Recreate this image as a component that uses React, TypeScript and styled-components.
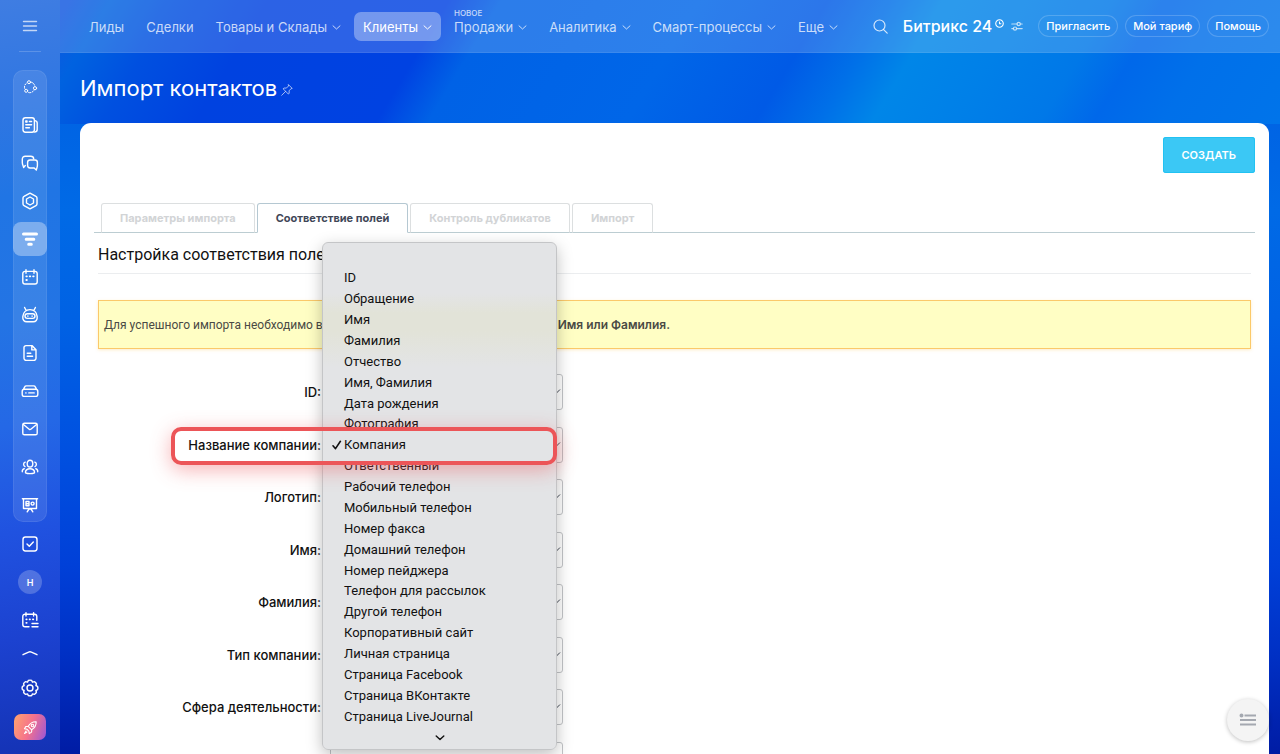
import React from 'react';
import styled, { createGlobalStyle, css } from 'styled-components';

const GlobalStyle = createGlobalStyle`
  *, *::before, *::after { box-sizing: border-box; }
  body {
    margin: 0;
    font-family: Inter, "Liberation Sans", sans-serif;
    color: #111;
  }
  button, select { font: inherit; color: inherit; }
  button { border: 0; padding: 0; background: none; cursor: pointer; }
  a { color: inherit; text-decoration: none; }
`;

const Shell = styled.div`
  display: grid;
  grid-template-columns: 60px minmax(0, 1fr);
  height: 100vh;
  overflow: hidden;
  background:
    linear-gradient(
      121deg,
      #1058e0 0, #1058e0 60px, #0062e0 95px, #0050e0 150px, #0042e0 230px, #0042e2 385px, #0062e6 430px, #0066e8 600px,
      #005ae6 710px, #0070e8 765px, #0086e8 810px, #0080e8 880px, #0078e8 955px, #0068ea 1000px, #0070ea 1060px, #0074ea 1161px
    ) top / 100% 124px no-repeat,
    linear-gradient(180deg, #0064e4 16%, #006ae6 28%, #0062e4 42%, #0050e0 60%, #0040d8 75%, #0030c4 87%, #001ca4 100%);
`;

const Sidebar = styled.nav`
  display: flex;
  flex-direction: column;
  align-items: center;
  gap: 4px;
  color: #fff;
  background: linear-gradient(170deg, #3f7de2 0%, #2f76e2 14%, #2075e4 26%, #2374e4 42%, #2468e6 56%, #2052e0 70%, #1c42d0 84%, #1432b4 100%);
`;

const MenuToggle = styled.button`
  display: grid;
  place-items: center;
  width: 34px;
  height: 52px;
  opacity: 0.7;
`;

const SideDivider = styled.hr`
  width: 22px;
  height: 1px;
  margin: -5px 0 13px;
  border: 0;
  background: #ffffff30;
`;

const SideGroup = styled.div`
  display: flex;
  flex-direction: column;
  gap: 4px;
  margin: 1px 0;
  border-radius: 10px;
  background: #ffffff1a;
  box-shadow: inset 0 0 0 1px #ffffff14;
`;

const SideButton = styled.button<{ $active?: boolean; $short?: boolean }>`
  display: grid;
  place-items: center;
  width: 34px;
  height: ${(p) => (p.$short ? 26 : 34)}px;
  border-radius: 8px;
  background: ${(p) => (p.$active ? '#ffffff58' : 'none')};
`;

const Avatar = styled.span`
  display: grid;
  place-items: center;
  width: 24px;
  height: 24px;
  border-radius: 50%;
  background: #ffffff38;
  font-size: 9px;
  font-weight: 600;
`;

const RocketButton = styled.button`
  display: grid;
  place-items: center;
  width: 32px;
  height: 26px;
  margin-top: 5px;
  border-radius: 7px;
  color: #fff;
  background: linear-gradient(110deg, #ffa56e 0%, #f5728c 50%, #9a56d8 100%);
`;

const Main = styled.main`
  display: flex;
  flex-direction: column;
  min-width: 0;
  min-height: 0;
`;

const TopBar = styled.header`
  display: flex;
  align-items: center;
  justify-content: space-between;
  flex: none;
  height: 53px;
  padding: 0 11px 0 20px;
  color: #fff;
  background: #ffffff2c;
  border-bottom: 1px solid #ffffff14;
`;

const NavList = styled.div`
  display: flex;
  gap: 4px;
`;

const NavLink = styled.a<{ $active?: boolean }>`
  position: relative;
  display: flex;
  align-items: center;
  gap: 5px;
  height: 29px;
  padding: 2px 9px 0;
  border-radius: 7px;
  font-size: 13px;
  white-space: nowrap;
  color: ${(p) => (p.$active ? '#fff' : '#ffffffc0')};
  background: ${(p) => (p.$active ? '#ffffff58' : 'none')};
`;

const NewMark = styled.span`
  position: absolute;
  left: 9px;
  top: -4px;
  font-size: 8px;
  line-height: 10px;
  font-weight: 500;
`;

const Tools = styled.div`
  display: flex;
  align-items: center;
  gap: 7px;
`;

const SearchButton = styled.button`
  display: grid;
  margin-right: 8px;
  color: #ffffffcc;
`;

const Brand = styled.a`
  display: flex;
  align-items: center;
  font-size: 16px;
  font-weight: 500;
  white-space: nowrap;
  svg { margin: 0 0 6px 3px; }
`;

const TuneButton = styled.button`
  display: grid;
  margin-right: 8px;
  color: #ffffffb0;
`;

const PillButton = styled.button`
  height: 22px;
  padding: 0 8px;
  border-radius: 11px;
  box-shadow: inset 0 0 0 1px #ffffff30;
  font-size: 11px;
  font-weight: 500;
  white-space: nowrap;
`;

const TitleRow = styled.div`
  display: flex;
  align-items: center;
  gap: 4px;
  flex: none;
  height: 70px;
  padding: 0 20px;
  color: #fff;
`;

const Title = styled.h1`
  margin: 0;
  font-size: 22px;
  font-weight: 400;
`;

const Pin = styled.button`
  display: grid;
  margin-top: 4px;
  color: #ffffffa0;
`;

const Panel = styled.section`
  flex: 1;
  min-height: 0;
  margin: 0 11px 0 20px;
  padding: 14px 14px 0;
  border-radius: 11px 11px 0 0;
  background: #fff;
  overflow: auto;
  scrollbar-width: none;
`;

const Actions = styled.div`
  display: flex;
  justify-content: flex-end;
`;

const CreateButton = styled.button`
  height: 36px;
  padding: 0 19px;
  border-radius: 3px;
  background: #3bc8f5;
  box-shadow: inset 0 0 0 1px #22c2f2;
  color: #fff;
  font-size: 11px;
  font-weight: 600;
`;

const Tabs = styled.div`
  display: flex;
  gap: 2px;
  height: 30px;
  margin-top: 30px;
  padding-left: 7px;
  border-bottom: 1px solid #bccdd2;
`;

const Tab = styled.button<{ $active?: boolean }>`
  height: 30px;
  padding: 0 18px;
  border: 1px solid #dcdfe0;
  border-bottom-color: #bccdd2;
  border-radius: 3px 3px 0 0;
  background: #fff;
  font-size: 11px;
  font-weight: 700;
  color: #d2d4d6;
  ${(p) =>
    p.$active &&
    css`
      border-color: #b5c8d2;
      border-bottom-color: #fff;
      color: #3f4757;
    `}
`;

const Content = styled.div`
  padding: 0 4px;
`;

const Heading = styled.h2`
  margin: 0;
  padding: 11px 0 8px;
  border-bottom: 1px solid #ebedef;
  font-family: Roboto, "Liberation Sans", sans-serif;
  font-size: 16px;
  line-height: 21px;
  font-weight: 400;
`;

const Notice = styled.p`
  display: flex;
  align-items: center;
  gap: 4px;
  height: 49px;
  margin: 26px 0 0;
  padding: 0 5px;
  border: 1px solid #fbc96a;
  background: #fffec4;
  box-shadow: 0 1px 3px #fbc96a60;
  font-family: Roboto, "Liberation Sans", sans-serif;
  font-size: 12px;
  color: #4a4a44;
  white-space: nowrap;
`;

const NoticeFields = styled.b`
  font-family: Inter, "Liberation Sans", sans-serif;
  font-weight: 600;
`;

/* Eight field rows share the height of the block equally. */
const Fields = styled.form`
  display: grid;
  grid-auto-rows: 1fr;
  grid-template-columns: 223px 242px;
  height: 420px;
  margin-top: 17px;
`;

const FieldLabel = styled.label`
  align-self: center;
  text-align: right;
  font-size: 13px;
  font-weight: 500;
`;

const FieldBox = styled.div`
  position: relative;
  display: flex;
  align-items: center;
  padding-left: 9px;
`;

const Select = styled.select`
  appearance: none;
  width: 100%;
  height: 36px;
  padding: 0 28px 0 12px;
  border: 1px solid #c3c5c8;
  border-radius: 3px;
  background: #fff;
  font-size: 13px;
`;

const SelectArrow = styled.svg`
  position: absolute;
  right: 2px;
  pointer-events: none;
`;

const Menu = styled.div`
  position: absolute;
  z-index: 2;
  left: 1px;
  top: -177px;
  width: 235px;
  height: 508px;
  padding-top: 25px;
  border: 1px solid #c4c5c7;
  border-radius: 6px;
  background: linear-gradient(180deg, #e3e4e6 0, #e3e4e6 50px, #e2e3d8 70px, #e2e3d8 88px, #e3e4e6 125px);
  box-shadow: 0 5px 16px #00000040;
`;

const MenuList = styled.div`
  display: grid;
  grid-auto-rows: 1fr;
  height: 459px;
`;

const Option = styled.button`
  display: flex;
  align-items: center;
  padding-left: 9px;
  font-family: Roboto, "Liberation Sans", sans-serif;
  font-size: 13px;
  text-align: left;
  white-space: nowrap;
`;

const Check = styled.span`
  flex: none;
  display: grid;
  width: 12px;
`;

const MenuMore = styled.div`
  display: grid;
  place-items: center;
  height: 22px;
`;

const Highlight = styled.div`
  position: absolute;
  z-index: 3;
  left: -150px;
  top: 8px;
  width: 386px;
  height: 38px;
  border: 4px solid #ec5558;
  border-radius: 10px;
  box-shadow: 0 5px 20px #ec555870;
  pointer-events: none;
`;

const ListFab = styled.button`
  position: fixed;
  right: 11px;
  bottom: 13px;
  display: grid;
  place-items: center;
  width: 42px;
  height: 42px;
  border-radius: 50%;
  background: #f4f4f4;
  box-shadow: 0 1px 4px #00000040;
  color: #a4a8b0;
`;

const Chevron = () => (
  <svg width="9" height="9" viewBox="0 0 9 9" fill="none" stroke="currentColor" strokeLinecap="round" strokeLinejoin="round">
    <path d="M1 2.800 4.500 6 8 2.800" />
  </svg>
);

const Icon = ({ children, size = 18, stroke = 1.4 }: { children: React.ReactNode; size?: number; stroke?: number }) => (
  <svg width={size} height={size} viewBox="0 0 18 18" fill="none" stroke="currentColor" strokeWidth={stroke} strokeLinecap="round" strokeLinejoin="round">
    {children}
  </svg>
);

const sideItems: { name: string; icon: React.ReactNode; active?: boolean }[] = [
  {
    name: 'Совместная работа',
    icon: (
      <Icon stroke={1}>
        <circle cx="8" cy="4.200" r="1.500" />
        <circle cx="14" cy="10.200" r="1.600" />
        <circle cx="5.200" cy="12.800" r="1.500" />
        <path d="M10.500 4.200c1.400.5 2.500 1.500 3 2.900" />
        <path d="M12.600 12.800c-1.200 1.500-3 2.200-4.900 1.800M3.600 10.300c-.4-1.900.2-3.800 1.700-5" strokeDasharray="2 1.600" />
      </Icon>
    ),
  },
  {
    name: 'Новости',
    icon: (
      <Icon>
        <rect x="2" y="1.8" width="11.4" height="14.4" rx="2.4" />
        <path d="M13.6 4.6c1.6.1 2.6.9 2.6 2.4v6.6c0 1.6-1.1 2.5-2.9 2.5M4.8 8.8h5.8M4.8 11.8h3.6M8.4 5.5h2.2" />
        <path d="M4.8 5h1.2v1H4.8z" />
      </Icon>
    ),
  },
  {
    name: 'Чаты',
    icon: (
      <Icon>
        <path d="M4.3 11.6 2.6 13.4c-.3-1.4-1.3-3-1.3-5V5.2C1.3 3.500 2.500 2.300 4.200 2.300h5.600c1.700 0 2.800 1 2.900 2.600" />
        <path d="M9 6h5a2.400 2.400 0 0 1 2.400 2.400v3.200c0 1.600-.8 2.800-1.100 4.400L13.200 14H9a2.400 2.400 0 0 1-2.400-2.400V8.400A2.400 2.400 0 0 1 9 6z" />
      </Icon>
    ),
  },
  {
    name: 'Битрикс24',
    icon: (
      <Icon>
        <path d="m9 1.100 6 3.300c.6.300 1 .9 1 1.600v6c0 .7-.4 1.300-1 1.600l-6 3.300-6-3.300c-.6-.3-1-.9-1-1.600V6c0-.7.4-1.300 1-1.600z" />
        <path d="m9 5 3.500 2v4L9 13l-3.500-2V7z" />
      </Icon>
    ),
  },
  {
    name: 'CRM',
    active: true,
    icon: (
      <Icon stroke={3}>
        <path d="M2.500 4h13M5.200 9.300h7.600M7.700 14.300h2.600" />
      </Icon>
    ),
  },
  {
    name: 'Календарь',
    icon: (
      <Icon>
        <path d="M4 3.400h10a2.200 2.200 0 0 1 2.200 2.200v8.200A2.200 2.200 0 0 1 14 16H4a2.200 2.200 0 0 1-2.200-2.200V5.600A2.200 2.200 0 0 1 4 3.400zM5 1.800v3.400M13 1.800v3.400" />
        <path d="M5.300 8.300h.6M8.700 8.300h.6M12.100 8.300h.6M5.300 12h.6" strokeWidth="1.800" />
      </Icon>
    ),
  },
  {
    name: 'CoPilot',
    icon: (
      <Icon>
        <path d="M3.600 1.500 5 4.300M14.400 1.500 13 4.300M9 3.600c4 0 6.600 2.700 7.200 7 .4 3.300-1.500 5.200-4 5.200H5.800c-2.500 0-4.400-1.900-4-5.200.6-4.300 3.200-7 7.200-7z" />
        <rect x="4" y="7.800" width="10" height="4.600" rx="2.300" />
        <path d="M6.900 9.900v.4M11.100 9.900v.4" />
      </Icon>
    ),
  },
  {
    name: 'Документы',
    icon: (
      <Icon>
        <path d="M5 1.600h6l4 4.200v8.400a2.200 2.200 0 0 1-2.200 2.200H5.200A2.200 2.200 0 0 1 3 14.200V3.600a2 2 0 0 1 2-2zM10.800 2v3.900h4M6.200 9.300h3.600M6.200 12.300h5.400" />
      </Icon>
    ),
  },
  {
    name: 'Диск',
    icon: (
      <Icon>
        <path d="M1.200 9.400c0-1.300 1-2.100 2.200-2.100h11.200c1.300 0 2.200.8 2.200 2.100v2.800c0 1.500-.8 2.200-2.200 2.200H3.400c-1.400 0-2.200-.8-2.200-2.200zM2.300 7.600l1.400-2.700c.3-.7.9-1 1.700-1h7.200c.8 0 1.400.3 1.700 1l1.400 2.700M4.700 10.900h.4M7.800 10.900h5.400" />
      </Icon>
    ),
  },
  {
    name: 'Почта',
    icon: (
      <Icon>
        <rect x="1.800" y="3.200" width="14.400" height="11.600" rx="1.600" />
        <path d="m2.400 4.500 5.800 4.800c.5.400 1.100.4 1.600 0l5.800-4.800" />
      </Icon>
    ),
  },
  {
    name: 'Группы',
    icon: (
      <Icon>
        <path d="M9 2.300c1.700 0 2.800 1.300 2.800 3.100S10.700 9 9 9 6.200 7.200 6.200 5.400 7.300 2.300 9 2.300zM4.500 14.800c-.4-2.400 1.700-4.100 4.500-4.100s4.900 1.700 4.500 4.100c-1.300.6-2.800.8-4.500.8s-3.200-.2-4.500-.8zM4.200 4.100c-2.200.8-2 3.700-.2 4.500M13.800 4.100c2.200.8 2 3.700.2 4.500M3.300 10.700c-1.400.5-2.200 1.500-2 3M14.700 10.700c1.400.5 2.200 1.500 2 3" />
      </Icon>
    ),
  },
  {
    name: 'Презентации',
    icon: (
      <Icon>
        <path d="M1.400 2.700h15.200M2.500 2.700v9.800h13V2.700M6.200 15.800 8 13h2l1.800 2.800" />
        <path d="M5 5.500h3v4.300H5zM5 7.700h3" />
        <circle cx="11.600" cy="7.600" r="1.500" />
      </Icon>
    ),
  },
];

const navItems: { text: string; chevron?: boolean; active?: boolean; isNew?: boolean }[] = [
  { text: 'Лиды' },
  { text: 'Сделки' },
  { text: 'Товары и Склады', chevron: true },
  { text: 'Клиенты', chevron: true, active: true },
  { text: 'Продажи', chevron: true, isNew: true },
  { text: 'Аналитика', chevron: true },
  { text: 'Смарт-процессы', chevron: true },
  { text: 'Еще', chevron: true },
];

const tabs = ['Параметры импорта', 'Соответствие полей', 'Контроль дубликатов', 'Импорт'];

const fields = ['ID', 'Название компании', 'Логотип', 'Имя', 'Фамилия', 'Тип компании', 'Сфера деятельности', ''];

const options = [
  'ID', 'Обращение', 'Имя', 'Фамилия', 'Отчество', 'Имя, Фамилия', 'Дата рождения', 'Фотография',
  'Компания', 'Ответственный', 'Рабочий телефон', 'Мобильный телефон', 'Номер факса', 'Домашний телефон',
  'Номер пейджера', 'Телефон для рассылок', 'Другой телефон', 'Корпоративный сайт', 'Личная страница',
  'Страница Facebook', 'Страница ВКонтакте', 'Страница LiveJournal',
];

const OptionMenu = ({ selected }: { selected: string }) => (
  <Menu>
    <MenuList role="listbox" aria-label="Поле контакта">
      {options.map((name) => (
        <Option key={name} type="button" role="option" aria-selected={name === selected}>
          <Check>
            {name === selected && (
              <svg width="10" height="10" viewBox="0 0 10 10" fill="none" stroke="currentColor" strokeWidth="1.6" strokeLinecap="round" strokeLinejoin="round">
                <path d="M1 5.800 3.500 8.600 8.400 1.300" />
              </svg>
            )}
          </Check>
          {name}
        </Option>
      ))}
    </MenuList>
    <MenuMore>
      <svg width="10" height="8" viewBox="0 0 10 8" fill="none" stroke="currentColor" strokeWidth="1.400" strokeLinecap="round" strokeLinejoin="round">
        <path d="m1.200 2 3.800 3.600L8.800 2" />
      </svg>
    </MenuMore>
  </Menu>
);

export default function App() {
  return (
    <>
      <GlobalStyle />
      <Shell>
        <Sidebar aria-label="Разделы">
          <MenuToggle aria-label="Меню">
            <Icon stroke={1.4}>
              <path d="M2.500 4.500h13M2.500 9h13M2.500 13.500h13" />
            </Icon>
          </MenuToggle>
          <SideDivider />
          <SideGroup>
            {sideItems.map((item) => (
              <SideButton key={item.name} aria-label={item.name} $active={item.active}>
                {item.icon}
              </SideButton>
            ))}
          </SideGroup>
          <SideButton aria-label="Задачи">
            <Icon>
              <rect x="2" y="2" width="14" height="14" rx="2.400" />
              <path d="m6 9 2.300 2.300L12.300 7" />
            </Icon>
          </SideButton>
          <SideButton aria-label="Профиль">
            <Avatar>Н</Avatar>
          </SideButton>
          <SideButton aria-label="Расписание">
            <Icon>
              <path d="M8 15.800H4a2.200 2.200 0 0 1-2.200-2.200V5.400A2.200 2.200 0 0 1 4 3.200h9.600a2.200 2.200 0 0 1 2.200 2.200v3.800M5 1.600V5M12.600 1.600V5M11 12.500h6M11 15.800h6" />
              <path d="M5.300 8.300h.4M8.600 8.300h.4M11.900 8.300h.4M5.300 11.800h.4" strokeWidth="1.800" />
            </Icon>
          </SideButton>
          <SideButton $short aria-label="Свернуть">
            <Icon>
              <path d="m2 9.700 5.600-2.600c.9-.4 1.900-.4 2.800 0L16 9.700" />
            </Icon>
          </SideButton>
          <SideButton aria-label="Настройки">
            <Icon>
              <path d="M7.300 1.500Q9 .7 10.700 1.500L11.500 3.200 13.300 2.700Q14.900 3.300 15.400 4.800L14.900 6.600 16.500 7.400Q17.300 9 16.500 10.700L14.900 11.500 15.400 13.300Q14.800 14.900 13.300 15.400L11.500 14.900 10.700 16.500Q9 17.300 7.300 16.500L6.500 14.900 4.700 15.400Q3.100 14.800 2.600 13.300L3.100 11.500 1.500 10.700Q.7 9 1.500 7.400L3.100 6.600 2.600 4.800Q3.200 3.200 4.700 2.700L6.500 3.200z" />
              <circle cx="9" cy="9" r="3" />
            </Icon>
          </SideButton>
          <RocketButton aria-label="Запуск">
            <Icon size={15} stroke={1.300}>
              <path d="M15.800 2.200c-4.300-.2-7.300 1.700-9.600 5.400l4.200 4.200c3.700-2.300 5.600-5.300 5.400-9.600zM6.300 7.500l-2.800.2-1.800 2.800 2.900.5M10.500 11.700l-.2 2.800-2.800 1.800-.5-2.900M4.600 11l2.400 2.400M3.600 13.200l-1.800 3 3-1.800" />
              <circle cx="11.400" cy="6.600" r="1.500" />
            </Icon>
          </RocketButton>
        </Sidebar>

        <Main>
          <TopBar>
            <NavList>
              {navItems.map((item) => (
                <NavLink key={item.text} href="#" $active={item.active}>
                  {item.isNew && <NewMark>НОВОЕ</NewMark>}
                  {item.text}
                  {item.chevron && <Chevron />}
                </NavLink>
              ))}
            </NavList>
            <Tools>
              <SearchButton aria-label="Поиск">
                <svg width="15" height="15" viewBox="0 0 15 15" fill="none" stroke="currentColor" strokeWidth="1.200" strokeLinecap="round">
                  <circle cx="6.500" cy="6.500" r="5.500" />
                  <path d="m10.600 10.600 3.600 3.600" />
                </svg>
              </SearchButton>
              <Brand href="#">
                Битрикс 24
                <svg width="9" height="9" viewBox="0 0 10 10" fill="none" stroke="currentColor" strokeWidth="1.200">
                  <circle cx="5" cy="5" r="4.200" />
                  <path d="M5 2.800V5.200h2" />
                </svg>
              </Brand>
              <TuneButton aria-label="Настроить">
                <svg width="12" height="12" viewBox="0 0 12 12" fill="none" stroke="currentColor" strokeWidth="1.200" strokeLinecap="round">
                  <path d="M.8 4h5M9.600 4h1.600M.8 8.600h1.400M6 8.600h5.200" />
                  <circle cx="7.700" cy="4" r="1.600" />
                  <circle cx="4" cy="8.600" r="1.600" />
                </svg>
              </TuneButton>
              <PillButton>Пригласить</PillButton>
              <PillButton>Мой тариф</PillButton>
              <PillButton>Помощь</PillButton>
            </Tools>
          </TopBar>

          <TitleRow>
            <Title>Импорт контактов</Title>
            <Pin aria-label="Закрепить">
              <svg width="12" height="12" viewBox="0 0 12 12" fill="none" stroke="currentColor" strokeLinecap="round" strokeLinejoin="round">
                <path d="m7.600.8 3.600 3.600-1.300.4-1.800 2 .1 2.600-.9.600L2.200 4.900l.7-.9 2.500.1 1.900-1.900zM4.500 7.500.7 11.300" />
              </svg>
            </Pin>
          </TitleRow>

          <Panel>
            <Actions>
              <CreateButton>СОЗДАТЬ</CreateButton>
            </Actions>
            <Tabs role="tablist">
              {tabs.map((name, i) => (
                <Tab key={name} role="tab" aria-selected={i === 1} $active={i === 1}>
                  {name}
                </Tab>
              ))}
            </Tabs>
            <Content>
              <Heading>Настройка соответствия полей</Heading>
              <Notice>
                Для успешного импорта необходимо выбрать соответствие хотя бы для полей:
                <NoticeFields>Имя или Фамилия.</NoticeFields>
              </Notice>
              <Fields>
                {fields.map((name, i) => (
                  <React.Fragment key={i}>
                    <FieldLabel htmlFor={`field-${i}`}>{name && `${name}:`}</FieldLabel>
                    <FieldBox>
                      <Select id={`field-${i}`} />
                      <SelectArrow width="12" height="8" viewBox="0 0 12 8" fill="none" stroke="#444b57">
                        <path d="m2 1.500 4.500 4.500L11 1.500" />
                      </SelectArrow>
                      {i === 1 && (
                        <>
                          <OptionMenu selected="Компания" />
                          <Highlight />
                        </>
                      )}
                    </FieldBox>
                  </React.Fragment>
                ))}
              </Fields>
            </Content>
          </Panel>
        </Main>
        <ListFab aria-label="Список">
          <svg width="18" height="14" viewBox="0 0 18 14" fill="none" stroke="currentColor" strokeWidth="2">
            <path d="M5.500 2.500H17M1 7h16M1 11.500h16" />
            <circle cx="2.500" cy="2.500" r="1" />
          </svg>
        </ListFab>
      </Shell>
    </>
  );
}
